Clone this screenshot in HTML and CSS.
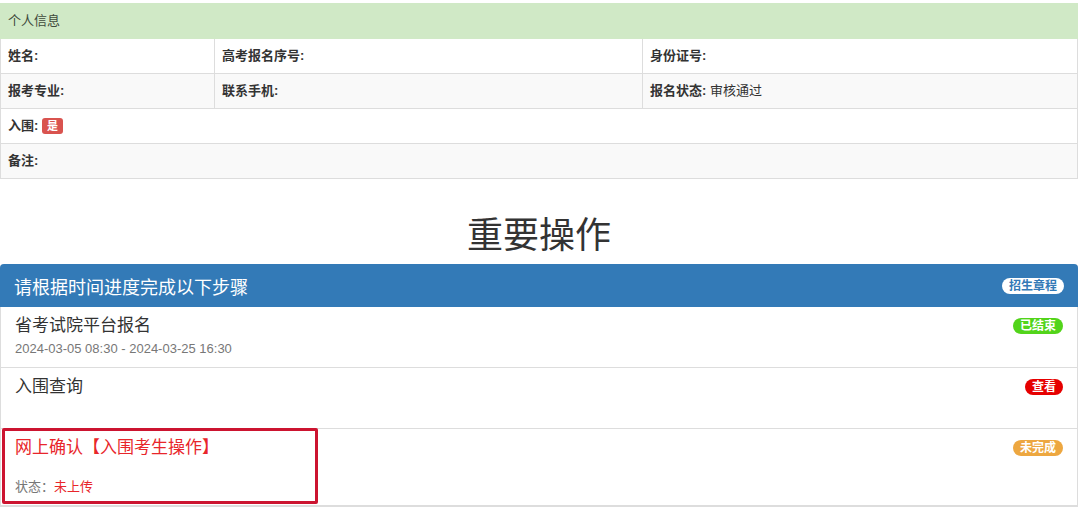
FILE: index.html
```html
<!DOCTYPE html>
<html lang="zh-CN">
<head>
  <meta charset="UTF-8" />
  <title>个人信息</title>
  <link rel="stylesheet" href="styles.css">
</head>
<body>
  <div class="page">
    <table class="info-table">
      <tr class="info-head">
        <td colspan="3">个人信息</td>
      </tr>
      <tr>
        <td class="col-a"><b>姓名:</b></td>
        <td class="col-b"><b>高考报名序号:</b></td>
        <td><b>身份证号:</b></td>
      </tr>
      <tr>
        <td><b>报考专业:</b></td>
        <td><b>联系手机:</b></td>
        <td><b>报名状态:</b> 审核通过</td>
      </tr>
      <tr>
        <td colspan="3"><b>入围:</b> <span class="label-red">是</span></td>
      </tr>
      <tr>
        <td colspan="3"><b>备注:</b></td>
      </tr>
    </table>

    <h2 class="section-title">重要操作</h2>

    <div class="panel">
      <div class="panel-heading">
        <span class="panel-title">请根据时间进度完成以下步骤</span>
        <span class="badge badge-white">招生章程</span>
      </div>
      <div class="list-item">
        <span class="badge badge-green">已结束</span>
        <div class="item-title">省考试院平台报名</div>
        <div class="item-sub">2024-03-05 08:30 - 2024-03-25 16:30</div>
      </div>
      <div class="list-item">
        <span class="badge badge-red">查看</span>
        <div class="item-title">入围查询</div>
        <div class="item-sub">&nbsp;</div>
      </div>
      <div class="list-item highlight">
        <span class="badge badge-orange">未完成</span>
        <div class="item-title red">网上确认【入围考生操作】</div>
        <div class="item-gap"></div>
        <div class="item-status">状态：<span class="red">未上传</span></div>
        <div class="mark-box"></div>
      </div>
    </div>
  </div>
</body>
</html>
```

FILE: styles.css
```css
body {
  margin: 0;
  background: #ffffff;
  font-family: "Liberation Sans", "Noto Sans CJK SC", sans-serif;
  color: #333333;
}

.page {
  width: 1078px;
  padding-top: 3px;
}

.info-table {
  width: 100%;
  border-collapse: collapse;
  border: 1px solid #dddddd;
  font-size: 13px;
}

.info-table td {
  border: 1px solid #dddddd;
  padding: 8px 8px 8px 7px;
  line-height: 18px;
  height: 18px;
}

.info-table tr:nth-child(odd) td {
  background: #f9f9f9;
}

.info-table tr.info-head td {
  background: #d0e9c6;
  border-color: #d0e9c6;
  color: #3f4a3c;
}

.col-a {
  width: 198px;
}

.col-b {
  width: 412px;
}

.label-red {
  display: inline-block;
  background: #d9534f;
  color: #ffffff;
  font-size: 11px;
  font-weight: bold;
  line-height: 14px;
  padding: 1px 5px;
  border-radius: 3px;
}

.section-title {
  margin: 37px 0 8px;
  font-size: 36px;
  font-weight: normal;
  line-height: 40px;
  text-align: center;
  color: #333333;
}

.panel {
  border: 1px solid #dddddd;
  border-top: none;
  border-radius: 4px 4px 0 0;
}

.panel-heading {
  display: flex;
  justify-content: space-between;
  align-items: center;
  height: 43px;
  padding: 0 14px 0 14px;
  margin: 0 -1px;
  background: #337ab7;
  border-radius: 4px 4px 0 0;
  color: #ffffff;
}

.panel-title {
  font-size: 18px;
}

.badge {
  display: inline-block;
  font-size: 12px;
  font-weight: bold;
  line-height: 14px;
  padding: 1px 7px;
  border-radius: 10px;
  color: #ffffff;
}

.badge-white {
  background: #ffffff;
  color: #337ab7;
}

.badge-green {
  background: #52d41a;
}

.badge-red {
  background: #e60000;
}

.badge-orange {
  background: #eda740;
}

.list-item {
  position: relative;
  padding: 8px 14px 8px 14px;
  border-bottom: 1px solid #dddddd;
}

.list-item .badge {
  float: right;
  margin-top: 3px;
}

.item-title {
  font-size: 17px;
  line-height: 22px;
  color: #333333;
}

.item-sub {
  margin-top: 2px;
  font-size: 13px;
  line-height: 20px;
  color: #777777;
}

.item-gap {
  height: 18px;
}

.item-status {
  font-size: 13px;
  line-height: 20px;
  color: #777777;
}

.red {
  color: #e8262b;
}

.mark-box {
  position: absolute;
  left: 1px;
  top: -1px;
  width: 310px;
  height: 70px;
  border: 3px solid #cc1430;
  border-radius: 2px;
}
```
